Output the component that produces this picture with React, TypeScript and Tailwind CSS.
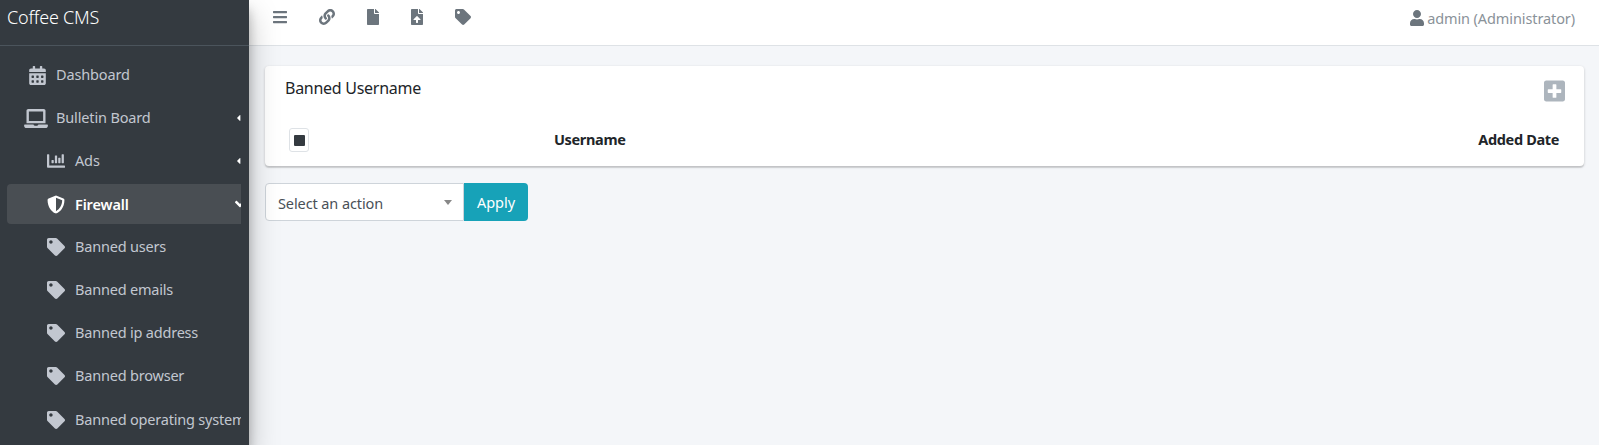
import React from 'react'
import { FaCalendarAlt, FaLaptop, FaChartBar, FaShieldAlt, FaTag, FaBars, FaLink, FaFile, FaFileUpload, FaUser, FaPlusSquare, FaAngleLeft, FaCaretLeft } from 'react-icons/fa'

const font = "font-['Noto_Sans','Open_Sans',sans-serif]"

const subItems = ['Banned users', 'Banned emails', 'Banned ip address', 'Banned browser', 'Banned operating system']

const App = () => {
  return (
    <div className={`flex h-[445px] w-[1599px] overflow-hidden bg-[#f4f6f9] text-[15px] ${font}`}>
      {/* sidebar */}
      <div className="z-10 flex h-full w-[249px] shrink-0 flex-col bg-[#343a40] shadow-[0_14px_28px_rgba(0,0,0,0.25),0_10px_10px_rgba(0,0,0,0.22)]">
        <div className="flex h-[46px] shrink-0 items-start border-b border-[#4b545c] pl-[7px] pt-[4px] text-[18px] font-light leading-[27px] tracking-[-0.2px] text-white">
          Coffee CMS
        </div>
        <div className="flex w-[241px] flex-col overflow-hidden pl-[7px] pt-[9px] text-[14.5px] tracking-[-0.15px] text-[#c2c7d0]">
          <div className="flex h-[40px] items-center">
            <FaCalendarAlt className="ml-[22px] mr-[10px] h-[19px] w-[17px]" />
            <span>Dashboard</span>
          </div>
          <div className="mt-[3px] flex h-[40px] items-center">
            <FaLaptop className="ml-[17px] mr-[8px] h-[19px] w-[24px]" />
            <span className="flex-1">Bulletin Board</span>
            <FaCaretLeft className="h-[10px] w-[5px] shrink-0 text-white" />
          </div>
          <div className="mt-[3px] flex h-[40px] items-center">
            <FaChartBar className="ml-[40px] mr-[10px] h-[18px] w-[18px]" />
            <span className="flex-1">Ads</span>
            <FaCaretLeft className="h-[10px] w-[5px] shrink-0 text-white" />
          </div>
          <div className="mt-[3px] flex h-[40px] items-center rounded-l-[4px] bg-[#494e53] font-semibold text-white">
            <FaShieldAlt className="ml-[40px] mr-[10px] h-[19px] w-[18px]" />
            <span className="flex-1 pt-[2px]">Firewall</span>
            <FaAngleLeft className="mr-[-6px] h-[16px] w-[14px] shrink-0 -rotate-90" />
          </div>
          {subItems.map((item) => (
            <div key={item} className="mt-[3px] flex h-[40px] items-center whitespace-nowrap last:mt-[4px]">
              <FaTag className="ml-[40px] mr-[10px] h-[18px] w-[18px] shrink-0" />
              <span className="tracking-[-0.2px]">{item}</span>
            </div>
          ))}
        </div>
      </div>

      {/* main */}
      <div className="flex flex-1 flex-col">
        <div className="flex h-[46px] shrink-0 items-start justify-between border-b border-[#dee2e6] bg-white pl-[24px] pr-[24px] pt-[9px] text-[#6c757d]">
          <div className="flex items-center">
            <FaBars className="h-[16px] w-[14px]" />
            <FaLink className="ml-[32px] h-[16px] w-[16px]" />
            <FaFile className="ml-[32px] h-[16px] w-[12px]" />
            <FaFileUpload className="ml-[32px] h-[16px] w-[12px]" />
            <FaTag className="ml-[32px] h-[16px] w-[16px]" />
          </div>
          <div className="flex items-center text-[14.5px] leading-[18px] tracking-[-0.1px] text-[#8a9299]">
            <FaUser className="mr-[3px] h-[16px] w-[14px] text-[#6c757d]" />
            <span>admin (Administrator)</span>
          </div>
        </div>

        <div className="pl-[16px] pr-[15px] pt-[20px]">
          <div className="h-[100px] rounded-[4px] bg-white shadow-[0_1px_3px_rgba(0,0,0,0.2),0_2px_0_rgba(0,0,0,0.08)]">
            <div className="flex h-[38px] items-start justify-between pl-[20px] pr-[19px] pt-[10px]">
              <div className="text-[16px] leading-[24px] tracking-[-0.27px] text-[#212529]">Banned Username</div>
              <FaPlusSquare className="mt-[3px] h-[24px] w-[21px] shrink-0 text-[#adb5bd]" />
            </div>
            <div className="mt-[24px] flex items-center justify-between pl-[24px] pr-[25px]">
              <div className="flex h-[24px] w-[20px] items-center justify-center rounded-[3px] border border-[#dee2e6]">
                <div className="h-[11px] w-[11px] rounded-[1px] bg-[#343a40]" />
              </div>
              <div className="ml-[245px] flex-1 text-[14.5px] font-bold tracking-[-0.35px] text-[#212529]">Username</div>
              <div className="text-[14.5px] font-bold tracking-[-0.35px] text-[#212529]">Added Date</div>
            </div>
          </div>

          <div className="mt-[17px] flex h-[38px]">
            <div className="flex w-[199px] items-center justify-between rounded-l-[4px] border border-[#ced4da] bg-white pl-[12px] pr-[11px] text-[14.5px] tracking-[-0.1px] text-[#495057]">
              <span className="pt-[3px]">Select an action</span>
              <div className="h-0 w-0 border-x-[4px] border-t-[5px] border-x-transparent border-t-[#888888]" />
            </div>
            <button className="w-[64px] rounded-r-[4px] bg-[#17a2b8] pt-[2px] text-[14.5px] text-white">Apply</button>
          </div>
        </div>
      </div>
    </div>
  )
}

export default App
